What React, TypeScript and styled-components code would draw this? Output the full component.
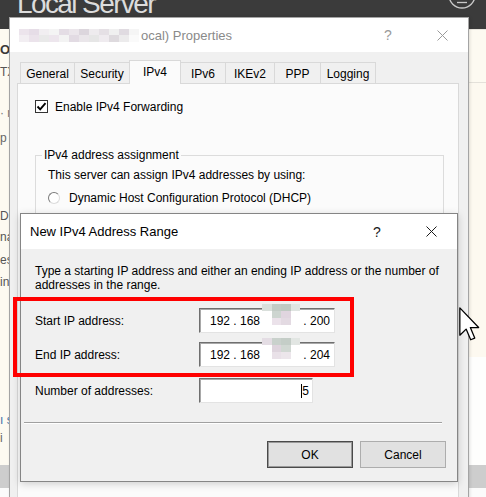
import styled, { createGlobalStyle } from 'styled-components';

const GlobalStyle = createGlobalStyle`
  html, body { margin: 0; padding: 0; background: #fdfaf2; }
  body {
    font-family: 'Liberation Sans', Arial, sans-serif;
    font-size: 12px;
    color: #000;
  }
  *, *::before, *::after { box-sizing: border-box; }
`;

type Cells = string[][];

const titleMosaic: Cells = [
  ['#ece4ec', '#e6dde7', '#f1eef1', '#f4f4f4', '#e4dde5', '#ebe6eb', '#dcd6dd', '#eeebee', '#e5e0e5', '#f0f0f0', '#e0dbe1', '#f5f5f5'],
  ['#f2eef2', '#ebe3eb', '#e9e9e9', '#ede6ed', '#f3f3f3', '#e2dbe3', '#eae6ea', '#e6e6e6', '#efebef', '#dedade', '#ecebec', '#fafafa'],
];

const ipMosaicA: Cells = [
  ['#d9dfdb', '#c2cbc5', '#bfc9c2', '#dfe4e1'],
  ['#ffffff', '#cdd5d0', '#e0d5df', '#ffffff'],
  ['#ffffff', '#ebe2ea', '#e3dae2', '#ffffff'],
];

const ipMosaicB: Cells = [
  ['#e4dde4', '#c9d1cc', '#c4cdc7', '#e2e6e3'],
  ['#ffffff', '#ded4dd', '#d1d8d3', '#ffffff'],
  ['#ffffff', '#e9e1e8', '#ece6eb', '#ffffff'],
];

const tabs = [
  { label: 'General', width: 55 },
  { label: 'Security', width: 56 },
  { label: 'IPv4', width: 52, active: true },
  { label: 'IPv6', width: 46 },
  { label: 'IKEv2', width: 50 },
  { label: 'PPP', width: 47 },
  { label: 'Logging', width: 56 },
];

// bits of the Server Manager page that peek out left of the dialogs
const leftScraps = [
  { gap: 14, text: 'OR', tone: '#3a3a3a', bold: true },
  { gap: 8, text: 'TX', tone: '#555' },
  { gap: 27, text: '· r', tone: '#777' },
  { gap: 11, text: ' p', tone: '#666' },
  { gap: 64, text: 'D', tone: '#555' },
  { gap: 7, text: 'na', tone: '#555' },
  { gap: 9, text: 'es', tone: '#555' },
  { gap: 8, text: 'in', tone: '#555' },
  { gap: 124, text: 'ı s', tone: '#3d6fa6' },
  { gap: 4, text: ' i', tone: '#666' },
];

function Mosaic({ cells, cell }: { cells: Cells; cell: [number, number] }) {
  return (
    <MosaicGrid $cols={cells[0].length} $w={cell[0]} $h={cell[1]} aria-hidden="true">
      {cells.flat().map((c, i) => (
        <span key={i} style={{ background: c }} />
      ))}
    </MosaicGrid>
  );
}

function CloseGlyph({ color }: { color: string }) {
  return (
    <svg width="11" height="11" viewBox="0 0 11 11">
      <path d="M0.5 0.5 L10.5 10.5 M10.5 0.5 L0.5 10.5" stroke={color} strokeWidth="1" fill="none" />
    </svg>
  );
}

function Caption({ inactive }: { inactive?: boolean }) {
  const color = inactive ? '#9a9a9a' : '#1a1a1a';
  return (
    <CaptionButtons>
      <CaptionButton $color={color}>?</CaptionButton>
      <CaptionButton $color={color}>
        <CloseGlyph color={color} />
      </CaptionButton>
    </CaptionButtons>
  );
}

function ServerManager() {
  return (
    <Manager>
      <ManagerHeader>
        <ManagerTitle>Local Server</ManagerTitle>
        <svg width="30" height="17" viewBox="0 0 30 17">
          <circle cx="15" cy="-5" r="13" stroke="#c9c9c9" strokeWidth="1.4" fill="none" />
          <path d="M10 2.5 H20" stroke="#c9c9c9" strokeWidth="1.3" />
        </svg>
      </ManagerHeader>
      <ManagerBody>
        <LeftPane>
          {leftScraps.map((s, i) => (
            <Scrap key={i} $gap={s.gap} $tone={s.tone} $bold={s.bold}>
              {s.text}
            </Scrap>
          ))}
        </LeftPane>
        <CenterPane />
        <RightPane>
          <RightTop />
          <RightMiddle />
          <RightLower />
        </RightPane>
      </ManagerBody>
      <StatusBand />
      <BottomStrip />
    </Manager>
  );
}

function PropertiesWindow() {
  return (
    <Properties>
      <TitleBar $height={34}>
        <TitleText $inactive>
          <Mosaic cells={titleMosaic} cell={[10, 6.5]} />
          ocal) Properties
        </TitleText>
        <Caption inactive />
      </TitleBar>
      <TabRow>
        {tabs.map((t) => (
          <Tab key={t.label} $width={t.width} $active={t.active}>
            {t.label}
          </Tab>
        ))}
      </TabRow>
      <TabPanel>
        <CheckRow>
          <CheckBox>
            <svg width="11" height="11" viewBox="0 0 11 11">
              <path d="M1.5 5.5 L4.2 8.3 L9.5 2.2" stroke="#000" strokeWidth="1.9" fill="none" />
            </svg>
          </CheckBox>
          Enable IPv4 Forwarding
        </CheckRow>
        <GroupBox>
          <legend>IPv4 address assignment</legend>
          <GroupLine>This server can assign IPv4 addresses by using:</GroupLine>
          <RadioRow>
            <Radio />
            Dynamic Host Configuration Protocol (DHCP)
          </RadioRow>
        </GroupBox>
      </TabPanel>
    </Properties>
  );
}

function IpField({ mosaic, last }: { mosaic: Cells; last: string }) {
  return (
    <IpBox>
      <span>192 . 168</span>
      <IpMask>
        <Mosaic cells={mosaic} cell={[9.5, 7]} />
      </IpMask>
      <IpTail>. {last}</IpTail>
    </IpBox>
  );
}

function RangeWindow() {
  return (
    <Range>
      <TitleBar $height={35}>
        <TitleText>New IPv4 Address Range</TitleText>
        <Caption />
      </TitleBar>
      <RangeBody>
        <Description>
          Type a starting IP address and either an ending IP address or the number of
          <br />
          addresses in the range.
        </Description>
        <FieldRow $gap={16}>
          <FieldLabel>Start IP address:</FieldLabel>
          <IpField mosaic={ipMosaicA} last="200" />
        </FieldRow>
        <FieldRow $gap={9}>
          <FieldLabel>End IP address:</FieldLabel>
          <IpField mosaic={ipMosaicB} last="204" />
        </FieldRow>
        <FieldRow $gap={11}>
          <FieldLabel>Number of addresses:</FieldLabel>
          <CountBox>
            <Caret />5
          </CountBox>
        </FieldRow>
        <Separator />
        <ButtonRow>
          <DialogButton $default>OK</DialogButton>
          <DialogButton>Cancel</DialogButton>
        </ButtonRow>
      </RangeBody>
    </Range>
  );
}

export default function App() {
  return (
    <>
      <GlobalStyle />
      <Desktop>
        <ServerManager />
        <PropertiesWindow />
        <RangeWindow />
        <Highlight />
        <Pointer width="21" height="34" viewBox="0 0 12.4 20">
          <path
            d="M0.5 0.5 L0.5 16.6 L4.2 13 L6.9 19.3 L9.3 18.3 L6.7 12.1 L11.6 12.1 Z"
            fill="#fff"
            stroke="#000"
            strokeWidth="0.75"
            strokeLinejoin="round"
          />
        </Pointer>
      </Desktop>
    </>
  );
}

/* ---------- desktop + background window ---------- */

const Desktop = styled.div`
  position: relative;
  width: 486px;
  height: 497px;
  overflow: hidden;
  background: #fdfaf2;
`;

const Manager = styled.div`
  display: flex;
  flex-direction: column;
  height: 100%;
`;

const ManagerHeader = styled.div`
  height: 29px;
  flex: none;
  display: flex;
  justify-content: space-between;
  align-items: flex-start;
  padding: 0 9px 0 17px;
  background: #3b3b3b;
  overflow: hidden;
`;

const ManagerTitle = styled.div`
  margin-top: -10px;
  font-size: 28px;
  line-height: 28px;
  letter-spacing: -1.6px;
  color: #dcdcdc;
  white-space: nowrap;
`;

const ManagerBody = styled.div`
  flex: 1;
  display: flex;
  min-height: 0;
`;

const LeftPane = styled.div`
  width: 9px;
  display: flex;
  flex-direction: column;
  overflow: hidden;
  background: #fdfaf1;
`;

const Scrap = styled.div<{ $gap: number; $tone: string; $bold?: boolean }>`
  margin-top: ${(p) => p.$gap}px;
  height: 14px;
  line-height: 14px;
  font-size: ${(p) => (p.$bold ? 13 : 12)}px;
  font-weight: ${(p) => (p.$bold ? 700 : 400)};
  color: ${(p) => p.$tone};
  white-space: nowrap;
`;

const CenterPane = styled.div`
  flex: 1;
`;

const RightPane = styled.div`
  width: 17px;
  display: flex;
  flex-direction: column;
`;

const RightTop = styled.div`
  height: 54px;
  border-top: 1px solid #e9e6de;
  border-bottom: 1px solid #e4e1da;
  background: #fdfaf1;
`;

const RightMiddle = styled.div`
  flex: 1;
  background: #fdf9f0;
`;

const RightLower = styled.div`
  height: 108px;
  background: #fefefd;
`;

const StatusBand = styled.div`
  height: 23px;
  flex: none;
  background: #cdcdcd;
`;

const BottomStrip = styled.div`
  height: 9px;
  flex: none;
  background: #fbfbfb;
`;

/* ---------- shared window chrome ---------- */

const TitleBar = styled.div<{ $height: number }>`
  height: ${(p) => p.$height}px;
  flex: none;
  display: flex;
  align-items: center;
  justify-content: space-between;
  padding: 0 3px 0 9px;
  background: #fff;
`;

const TitleText = styled.div<{ $inactive?: boolean }>`
  display: flex;
  align-items: center;
  font-size: 13px;
  color: ${(p) => (p.$inactive ? '#8a8a8a' : '#000')};
  white-space: nowrap;
`;

const CaptionButtons = styled.div`
  display: flex;
  gap: 8px;
`;

const CaptionButton = styled.div<{ $color: string }>`
  width: 46px;
  height: 28px;
  display: flex;
  align-items: center;
  justify-content: center;
  font-size: 14px;
  color: ${(p) => p.$color};
`;

const MosaicGrid = styled.div<{ $cols: number; $w: number; $h: number }>`
  display: grid;
  grid-template-columns: repeat(${(p) => p.$cols}, ${(p) => p.$w}px);
  grid-auto-rows: ${(p) => p.$h}px;
  flex: none;
`;

/* ---------- properties dialog ---------- */

const Properties = styled.div`
  position: absolute;
  left: 9px;
  top: 17px;
  width: 460px;
  height: 492px;
  display: flex;
  flex-direction: column;
  border: 1px solid #a4a4a4;
  background: #f0f0f0;
  box-shadow: 1px 0 3px rgba(0, 0, 0, 0.12);

  ${TitleText} > div {
    margin-right: 2px;
  }
`;

const TabRow = styled.div`
  position: relative;
  z-index: 1;
  display: flex;
  align-items: flex-end;
  height: 24px;
  margin: 8px 0 -1px 10px;
`;

const Tab = styled.div<{ $width: number; $active?: boolean }>`
  width: ${(p) => p.$width}px;
  height: ${(p) => (p.$active ? 24 : 21)}px;
  margin-bottom: ${(p) => (p.$active ? 0 : 1)}px;
  margin-right: -1px;
  padding-top: 4px;
  line-height: 14px;
  text-align: center;
  border: 1px solid #d9d9d9;
  border-bottom: none;
  background: ${(p) => (p.$active ? '#fbfbfb' : '#f0f0f0')};
  position: relative;
  z-index: ${(p) => (p.$active ? 2 : 1)};
`;

const TabPanel = styled.div`
  flex: 1;
  margin: 0 9px 0 7px;
  border: 1px solid #d9d9d9;
  background: #fbfbfb;
  display: flex;
  flex-direction: column;
`;

const CheckRow = styled.div`
  display: flex;
  align-items: center;
  gap: 7px;
  height: 13px;
  margin: 16px 0 0 17px;
  line-height: 14px;
`;

const CheckBox = styled.div`
  width: 13px;
  height: 13px;
  display: flex;
  align-items: center;
  justify-content: center;
  border: 1px solid #333;
  background: #fff;
`;

const GroupBox = styled.fieldset`
  margin: 35px 14px 0 17px;
  padding: 6px 12px 0;
  height: 120px;
  border: 1px solid #dcdcdc;

  legend {
    margin-left: -6px;
    padding: 0 2px;
    line-height: 14px;
  }
`;

const GroupLine = styled.div`
  line-height: 14px;
`;

const RadioRow = styled.div`
  display: flex;
  align-items: center;
  gap: 9px;
  margin-top: 9px;
  line-height: 14px;
`;

const Radio = styled.div`
  width: 12px;
  height: 12px;
  border-radius: 50%;
  border: 1px solid;
  border-color: #7a7a7a #dcdcdc #dcdcdc #7a7a7a;
  background: #fff;
`;

/* ---------- range dialog ---------- */

const Range = styled.div`
  position: absolute;
  left: 20px;
  top: 213px;
  width: 438px;
  height: 269px;
  display: flex;
  flex-direction: column;
  border: 1px solid #858585;
  background: #f0f0f0;
  box-shadow: 0 2px 8px rgba(0, 0, 0, 0.18);
`;

const RangeBody = styled.div`
  flex: 1;
  display: flex;
  flex-direction: column;
  padding-top: 15px;
`;

const Description = styled.div`
  padding-left: 14px;
  line-height: 14px;
  white-space: nowrap;
`;

const FieldRow = styled.div<{ $gap: number }>`
  display: flex;
  align-items: center;
  height: 25px;
  margin-top: ${(p) => p.$gap}px;
  padding-left: 14px;
`;

const FieldLabel = styled.div`
  width: 164px;
  flex: none;
`;

const sunken = `
  height: 25px;
  display: flex;
  align-items: center;
  background: #fff;
  border: 1px solid;
  border-color: #6f6f6f #e3e3e3 #e3e3e3 #6f6f6f;
  box-shadow: inset 1px 1px 0 #a8a8a8;
`;

const IpBox = styled.div`
  ${sunken}
  width: 136px;
  padding: 0 4px 0 10px;
  white-space: nowrap;
`;

const IpMask = styled.div`
  align-self: flex-start;
  margin: -5px 0 0 2px;
`;

const IpTail = styled.span`
  margin-left: auto;
`;

const CountBox = styled.div`
  ${sunken}
  width: 114px;
  justify-content: flex-end;
  padding-right: 3px;
`;

const Caret = styled.span`
  width: 1px;
  height: 14px;
  background: #000;
`;

const Separator = styled.div`
  height: 2px;
  margin: 19px 15px 0 3px;
  border-top: 1px solid #a0a0a0;
  border-bottom: 1px solid #fff;
`;

const ButtonRow = styled.div`
  display: flex;
  justify-content: flex-end;
  gap: 7px;
  margin-top: 17px;
  padding-right: 11px;
`;

const DialogButton = styled.div<{ $default?: boolean }>`
  width: 86px;
  height: 27px;
  display: flex;
  align-items: center;
  justify-content: center;
  background: #e1e1e1;
  border: 1px solid ${(p) => (p.$default ? '#4a4a4a' : '#adadad')};
  box-shadow: ${(p) => (p.$default ? 'inset 0 0 0 1px #9a9a9a' : 'none')};
`;

/* ---------- overlays ---------- */

const Highlight = styled.div`
  position: absolute;
  left: 13px;
  top: 297px;
  width: 341px;
  height: 80px;
  border: 4px solid #ff0000;
  pointer-events: none;
`;

const Pointer = styled.svg`
  position: absolute;
  left: 459px;
  top: 307px;
`;
